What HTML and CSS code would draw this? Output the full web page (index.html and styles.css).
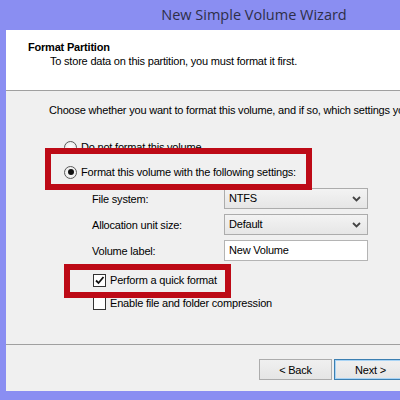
FILE: index.html
```html
<!DOCTYPE html>
<html lang="en">
<head>
  <meta charset="UTF-8" />
  <meta name="viewport" content="width=device-width, initial-scale=1.0"/>
  <title>New Simple Volume Wizard</title>
  <link rel="stylesheet" href="styles.css">
</head>
<body>
  <div class="window">
    <div class="titlebar">New Simple Volume Wizard</div>

    <div class="frame">
      <header class="head">
        <h1>Format Partition</h1>
        <p>To store data on this partition, you must format it first.</p>
      </header>

      <main class="content">
        <p class="intro">Choose whether you want to format this volume, and if so, which settings you want to use.</p>

        <div class="option"><span class="radio"></span>Do not format this volume</div>
        <div class="option"><span class="radio on"></span>Format this volume with the following settings:</div>

        <div class="settings">
          <span class="field-label">File system:</span>
          <div class="select">NTFS
            <svg class="chevron" width="9" height="6" viewBox="0 0 9 6"><path d="M1 1l3.5 3.5L8 1" fill="none" stroke="#444" stroke-width="1.8"/></svg>
          </div>
          <span class="field-label">Allocation unit size:</span>
          <div class="select">Default
            <svg class="chevron" width="9" height="6" viewBox="0 0 9 6"><path d="M1 1l3.5 3.5L8 1" fill="none" stroke="#444" stroke-width="1.8"/></svg>
          </div>
          <span class="field-label">Volume label:</span>
          <div class="textbox">New Volume</div>
        </div>

        <div class="check-row">
          <span class="checkbox">
            <svg width="11" height="11" viewBox="0 0 11 11"><path d="M2 5.5l2.5 2.5L9.5 2" fill="none" stroke="#111" stroke-width="1.8"/></svg>
          </span>Perform a quick format
        </div>
        <div class="check-row"><span class="checkbox"></span>Enable file and folder compression</div>
      </main>

      <footer class="buttons">
        <button class="btn">&lt; Back</button>
        <button class="btn default">Next &gt;</button>
        <button class="btn">Cancel</button>
      </footer>
    </div>

    <!-- red callouts drawn over the screenshot -->
    <div class="callout callout-format"></div>
    <div class="callout callout-quick"></div>
  </div>
</body>
</html>
```

FILE: styles.css
```css
body {
  margin: 0;
  width: 400px;
  height: 400px;
  overflow: hidden;
  background: #8a8ef2;
  font-family: 'Liberation Sans', Arial, sans-serif;
  font-size: 11px;
  letter-spacing: -0.2px;
  color: #000;
}
.window {
  position: relative;
  width: 508px;
}
.titlebar {
  height: 30px;
  line-height: 30px;
  text-align: center;
  font-family: 'Open Sans', sans-serif;
  font-size: 14.5px;
  letter-spacing: 0;
  color: #2e2e48;
}
.frame {
  margin: 0 6px;
  background: #f0f0f0;
}
.head {
  height: 60px;
  background: #fff;
  border-bottom: 1px solid #a0a0a0;
  box-sizing: content-box;
  padding: 0;
}
.head h1 {
  margin: 0;
  padding: 10px 0 0 22px;
  font-size: 11px;
  line-height: 14px;
  font-weight: bold;
}
.head p {
  margin: 0;
  padding-left: 44px;
  line-height: 14px;
}
.content {
  display: block;
  height: 254px;
  box-sizing: border-box;
  padding: 12px 0 0 43px;
  border-bottom: 1px solid #a0a0a0;
}
.intro {
  margin: 0 0 22px;
  line-height: 14px;
  white-space: nowrap;
}
.option {
  display: flex;
  align-items: center;
  height: 16px;
  margin-bottom: 9px;
  padding-left: 15px;
}
.radio {
  width: 11px;
  height: 11px;
  margin-right: 4px;
  border: 1px solid #5a5a5a;
  border-radius: 50%;
  background: radial-gradient(circle, #fff 0%, #e6e6e6 100%);
  display: flex;
  align-items: center;
  justify-content: center;
}
.radio.on::after {
  content: '';
  width: 6px;
  height: 6px;
  border-radius: 50%;
  background: #111;
}
.settings {
  display: grid;
  grid-template-columns: 132px 144px;
  grid-auto-rows: 21px;
  row-gap: 5px;
  align-items: center;
  margin: -1px 0 11px 43px;
}
.select,
.textbox {
  position: relative;
  height: 21px;
  box-sizing: border-box;
  padding: 0 4px;
  line-height: 19px;
  border: 1px solid #acacac;
}
.select {
  background: linear-gradient(#f3f3f3, #e6e6e6);
}
.textbox {
  background: #fff;
  border-color: #b4b4b4;
}
.chevron {
  position: absolute;
  right: 6px;
  top: 7px;
}
.check-row {
  display: flex;
  align-items: center;
  height: 16px;
  margin: 0 0 7px 44px;
}
.checkbox {
  width: 11px;
  height: 11px;
  margin-right: 4px;
  border: 1px solid #333;
  background: #fff;
  display: flex;
}
.buttons {
  height: 46px;
  box-sizing: border-box;
  padding: 14px 12px 0 0;
  display: flex;
  justify-content: flex-end;
  gap: 2px;
}
.btn {
  width: 73px;
  height: 21px;
  padding: 0;
  font-family: 'Liberation Sans', Arial, sans-serif;
  font-size: 11px;
  letter-spacing: -0.2px;
  color: #000;
  border: 1px solid #acacac;
  background: linear-gradient(#f0f0f0, #e5e5e5);
}
.btn.default {
  border-color: #3c7fb1;
  box-shadow: inset 0 0 0 1px #a9d4f5;
}
.btn + .btn + .btn {
  margin-left: 8px;
}
.callout {
  position: absolute;
  border: 6px solid #bd0a16;
}
.callout-format {
  left: 45px;
  top: 148px;
  width: 255px;
  height: 30px;
}
.callout-quick {
  left: 64px;
  top: 264px;
  width: 155px;
  height: 22px;
}
```
